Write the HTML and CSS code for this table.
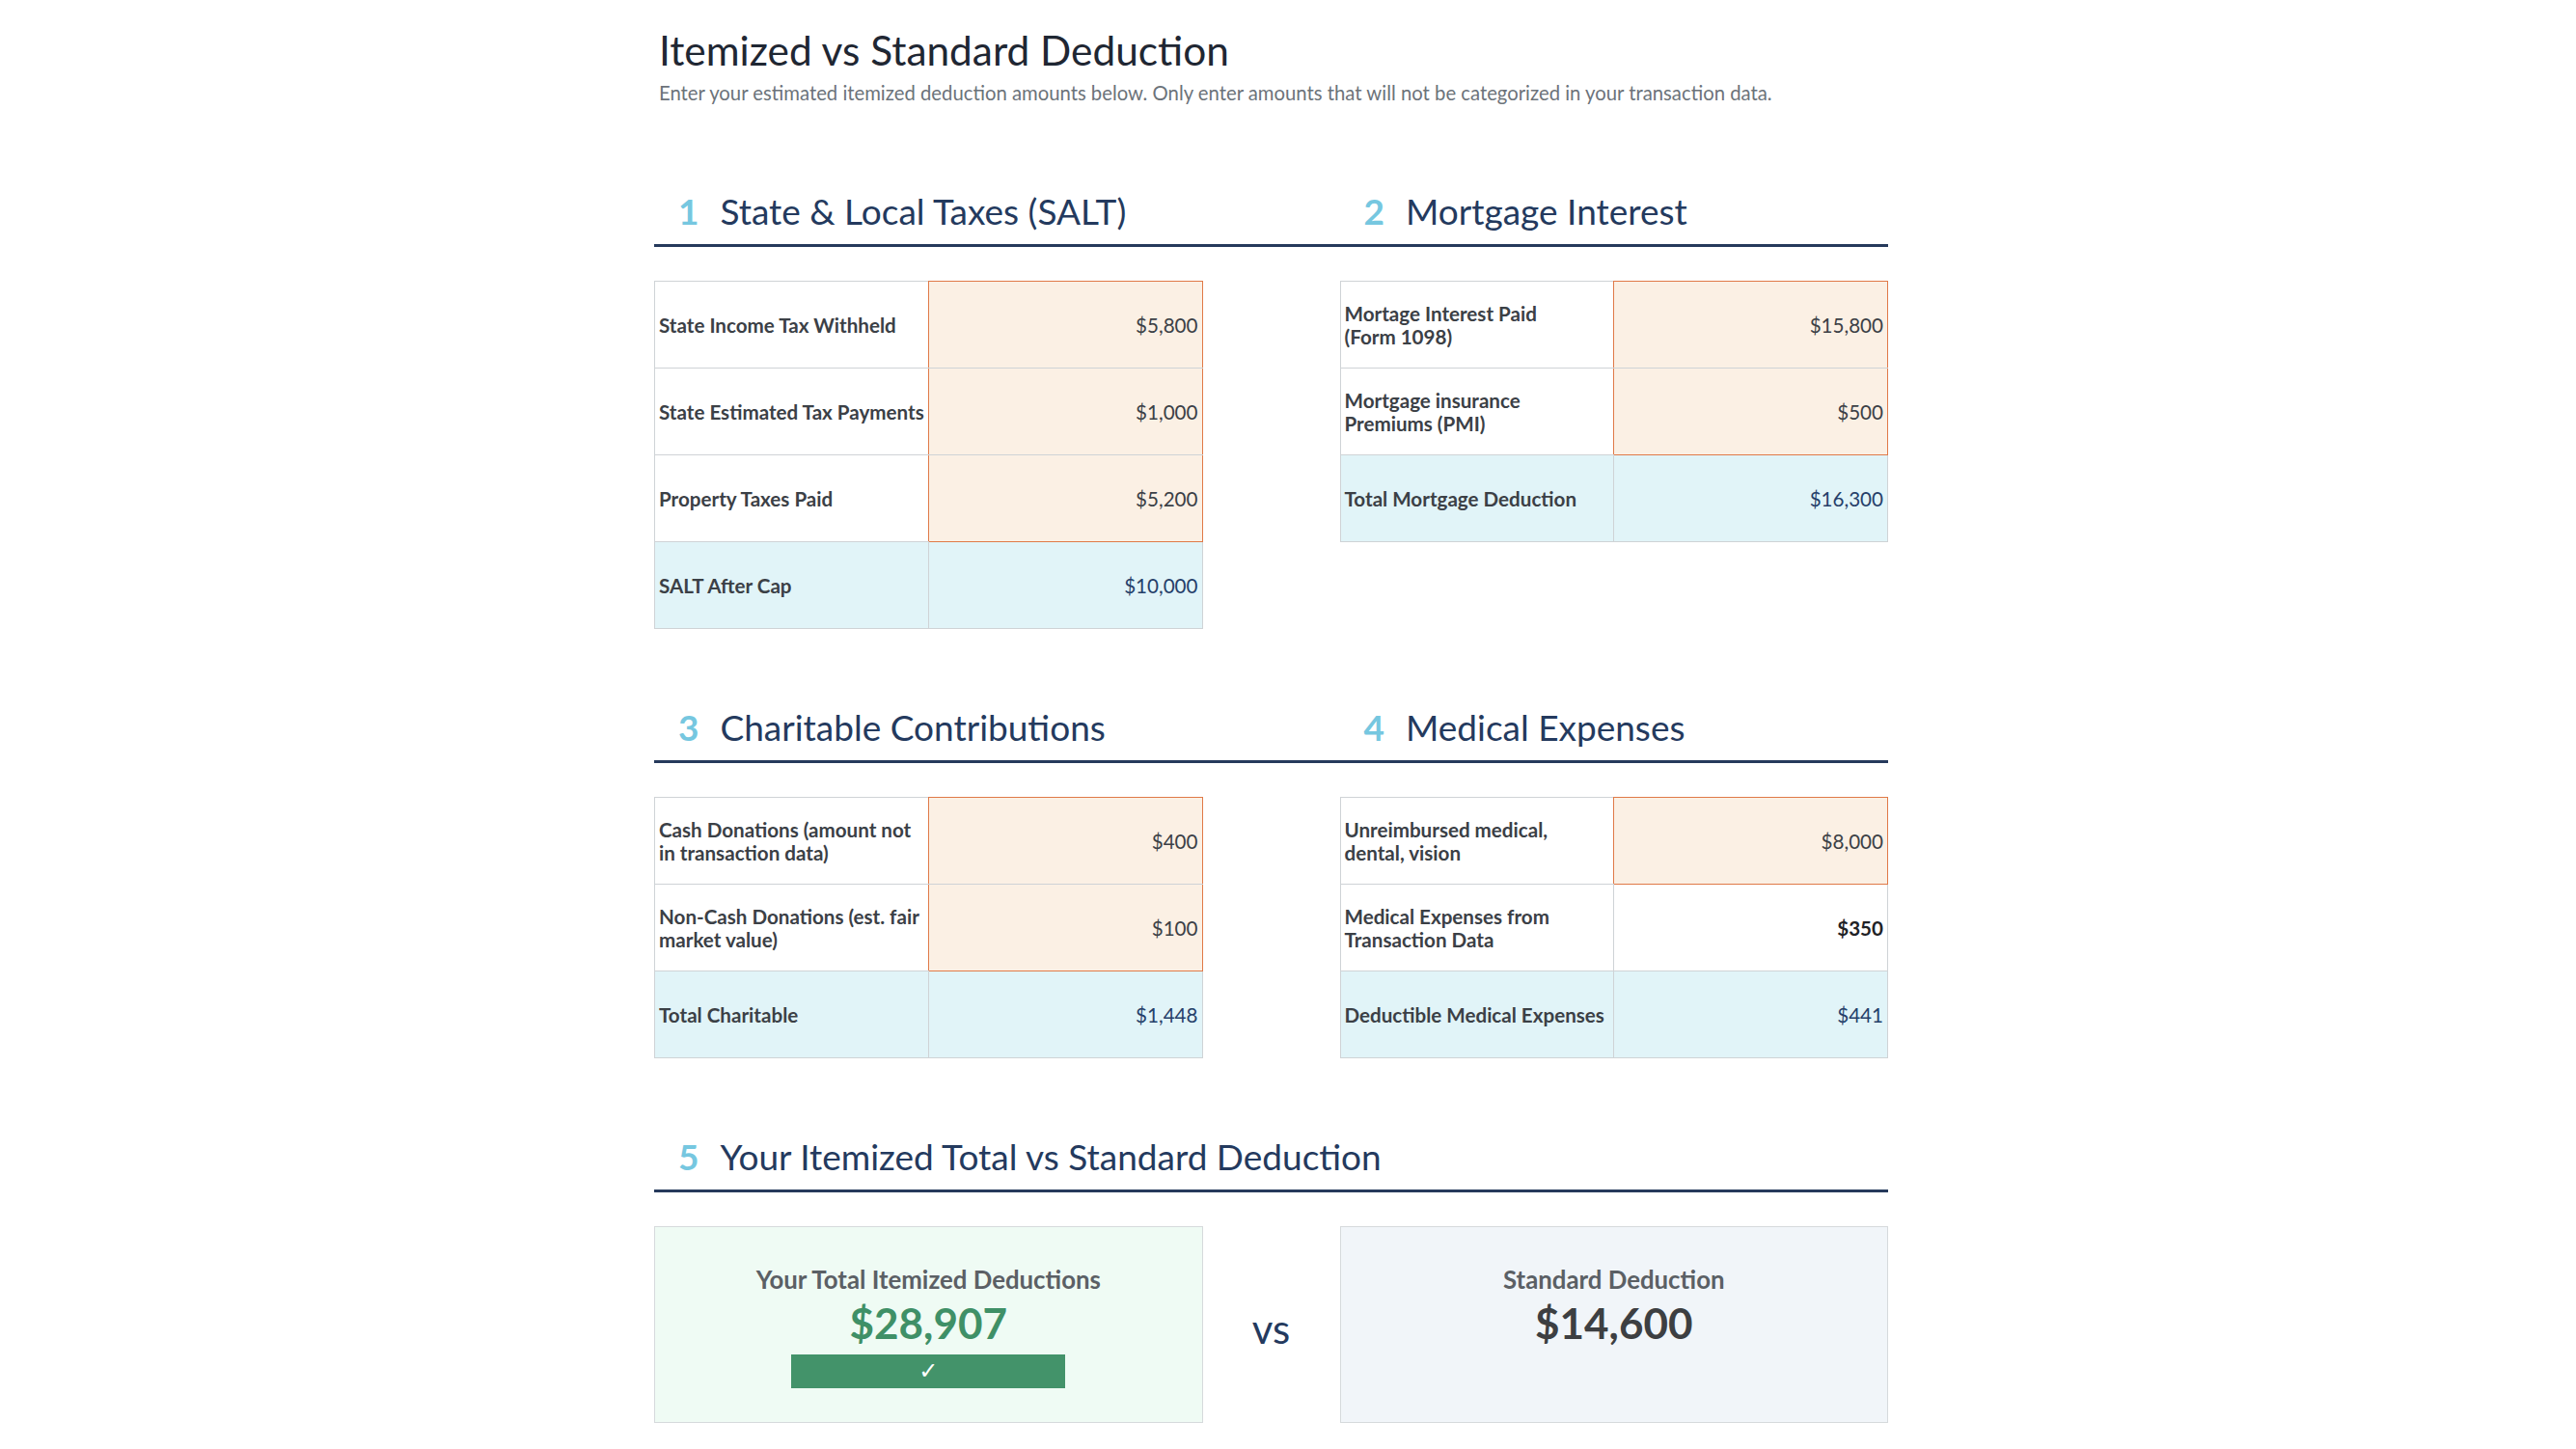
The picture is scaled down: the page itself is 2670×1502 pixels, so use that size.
FILE: index.html
```html
<!DOCTYPE html>
<html lang="en">
<head>
<meta charset="utf-8">
<title>Itemized vs Standard Deduction</title>
<link rel="stylesheet" href="styles.css">
</head>
<body>
<main class="page">
  <header class="intro">
    <h1 class="title">Itemized vs Standard Deduction</h1>
    <p class="subtitle">Enter your estimated itemized deduction amounts below. Only enter amounts that will not be categorized in your transaction data.</p>
  </header>

  <section class="section">
    <div class="heads">
      <h2 class="head"><span class="num">1</span><span>State &amp; Local Taxes (SALT)</span></h2>
      <h2 class="head"><span class="num">2</span><span>Mortgage Interest</span></h2>
    </div>
    <div class="pair">
      <table class="sheet">
        <tr><td class="lbl to-in">State Income Tax Withheld</td><td class="val in first">$5,800</td></tr>
        <tr><td class="lbl to-in">State Estimated Tax Payments</td><td class="val in">$1,000</td></tr>
        <tr><td class="lbl to-in">Property Taxes Paid</td><td class="val in last">$5,200</td></tr>
        <tr class="total"><td class="lbl">SALT After Cap</td><td class="val after">$10,000</td></tr>
      </table>
      <table class="sheet">
        <tr><td class="lbl to-in">Mortage Interest Paid<br>(Form 1098)</td><td class="val in first">$15,800</td></tr>
        <tr><td class="lbl to-in">Mortgage insurance<br>Premiums (PMI)</td><td class="val in last">$500</td></tr>
        <tr class="total"><td class="lbl">Total Mortgage Deduction</td><td class="val after">$16,300</td></tr>
      </table>
    </div>
  </section>

  <section class="section">
    <div class="heads">
      <h2 class="head"><span class="num">3</span><span>Charitable Contributions</span></h2>
      <h2 class="head"><span class="num">4</span><span>Medical Expenses</span></h2>
    </div>
    <div class="pair">
      <table class="sheet">
        <tr><td class="lbl to-in">Cash Donations (amount not<br>in transaction data)</td><td class="val in first">$400</td></tr>
        <tr><td class="lbl to-in">Non-Cash Donations (est. fair<br>market value)</td><td class="val in last">$100</td></tr>
        <tr class="total"><td class="lbl">Total Charitable</td><td class="val after">$1,448</td></tr>
      </table>
      <table class="sheet">
        <tr><td class="lbl to-in">Unreimbursed medical,<br>dental, vision</td><td class="val in first last">$8,000</td></tr>
        <tr><td class="lbl">Medical Expenses from<br>Transaction Data</td><td class="val after calc">$350</td></tr>
        <tr class="total"><td class="lbl">Deductible Medical Expenses</td><td class="val">$441</td></tr>
      </table>
    </div>
  </section>

  <section class="section">
    <div class="heads single">
      <h2 class="head"><span class="num">5</span><span>Your Itemized Total vs Standard Deduction</span></h2>
    </div>
    <div class="compare">
      <div class="card itemized">
        <div class="card-label">Your Total Itemized Deductions</div>
        <div class="card-amount">$28,907</div>
        <div class="winner">✓</div>
      </div>
      <div class="vs">vs</div>
      <div class="card standard">
        <div class="card-label">Standard Deduction</div>
        <div class="card-amount">$14,600</div>
      </div>
    </div>
  </section>
</main>
</body>
</html>
```

FILE: styles.css
```css
html, body {
  margin: 0;
  padding: 0;
  background: #ffffff;
}

body {
  font-family: Lato, "Open Sans", "Liberation Sans", sans-serif;
  color: #3b4046;
}

.page {
  width: 1279px;
  margin-left: 678px;
  padding-top: 27px;
  padding-bottom: 20px;
}

.intro {
  padding-left: 5px;
}

.title {
  margin: 0;
  font-size: 42.4px;
  line-height: 50px;
  font-weight: 400;
  color: #1f2733;
}

.subtitle {
  margin: 5px 0 0;
  font-size: 20.3px;
  line-height: 28px;
  color: #6c737a;
}

.section {
  margin-top: 80px;
}

.intro + .section {
  margin-top: 87px;
}

.heads {
  display: grid;
  grid-template-columns: 1fr 1fr;
  column-gap: 142px;
  padding-bottom: 12px;
  border-bottom: 3px solid #263a5c;
}

.heads.single {
  grid-template-columns: 1fr;
}

.head {
  margin: 0;
  padding-left: 25px;
  display: flex;
  align-items: baseline;
  gap: 22px;
  font-size: 37px;
  line-height: 44px;
  font-weight: 400;
  color: #243a5e;
}

.num {
  color: #76c7e0;
  font-weight: 700;
}

.pair {
  display: grid;
  grid-template-columns: 1fr 1fr;
  column-gap: 142px;
  align-items: start;
  margin-top: 35px;
}

.sheet {
  width: 100%;
  table-layout: fixed;
  border-collapse: collapse;
}

.sheet tr {
  height: 90px;
}

.sheet td {
  width: 50%;
  border: 1px solid #cfd3d6;
  padding: 0 4px;
  font-size: 20.6px;
  line-height: 24px;
  white-space: nowrap;
  vertical-align: middle;
}

.lbl {
  font-weight: 700;
  color: #3b4046;
}

.val {
  text-align: right;
  color: #3b4046;
}

.lbl.to-in {
  border-right-color: #e07a48;
}

.val.in {
  background: #fbf0e4;
  border-left-color: #e07a48;
  border-right-color: #e07a48;
}

.val.in.first {
  border-top-color: #e07a48;
}

.val.in.last {
  border-bottom-color: #e07a48;
}

.val.after {
  border-top-color: #e07a48;
}

.val.calc {
  color: #1f2226;
  font-weight: 700;
}

.total td {
  background: #e1f4f8;
}

.total .val {
  color: #26406a;
}

.compare {
  display: grid;
  grid-template-columns: 1fr 142px 1fr;
  margin-top: 35px;
}

.card {
  height: 204px;
  box-sizing: border-box;
  border: 1px solid #d6dadc;
  padding-top: 39px;
  display: flex;
  flex-direction: column;
  align-items: center;
}

.itemized {
  background: #effbf4;
}

.standard {
  background: #f1f5f9;
}

.card-label {
  font-size: 25.8px;
  line-height: 30px;
  font-weight: 700;
  color: #5b6065;
}

.card-amount {
  margin-top: 4px;
  font-size: 44px;
  line-height: 53px;
  font-weight: 700;
  color: #3d3f42;
}

.itemized .card-amount {
  color: #3f9067;
}

.winner {
  margin-top: 6px;
  width: 284px;
  height: 35px;
  background: #43936a;
  color: #ffffff;
  font-family: "DejaVu Sans", sans-serif;
  font-size: 24px;
  font-weight: 700;
  line-height: 35px;
  text-align: center;
}

.vs {
  align-self: center;
  text-align: center;
  font-size: 42px;
  line-height: 50px;
  color: #243a5e;
  padding-top: 8px;
}
```
